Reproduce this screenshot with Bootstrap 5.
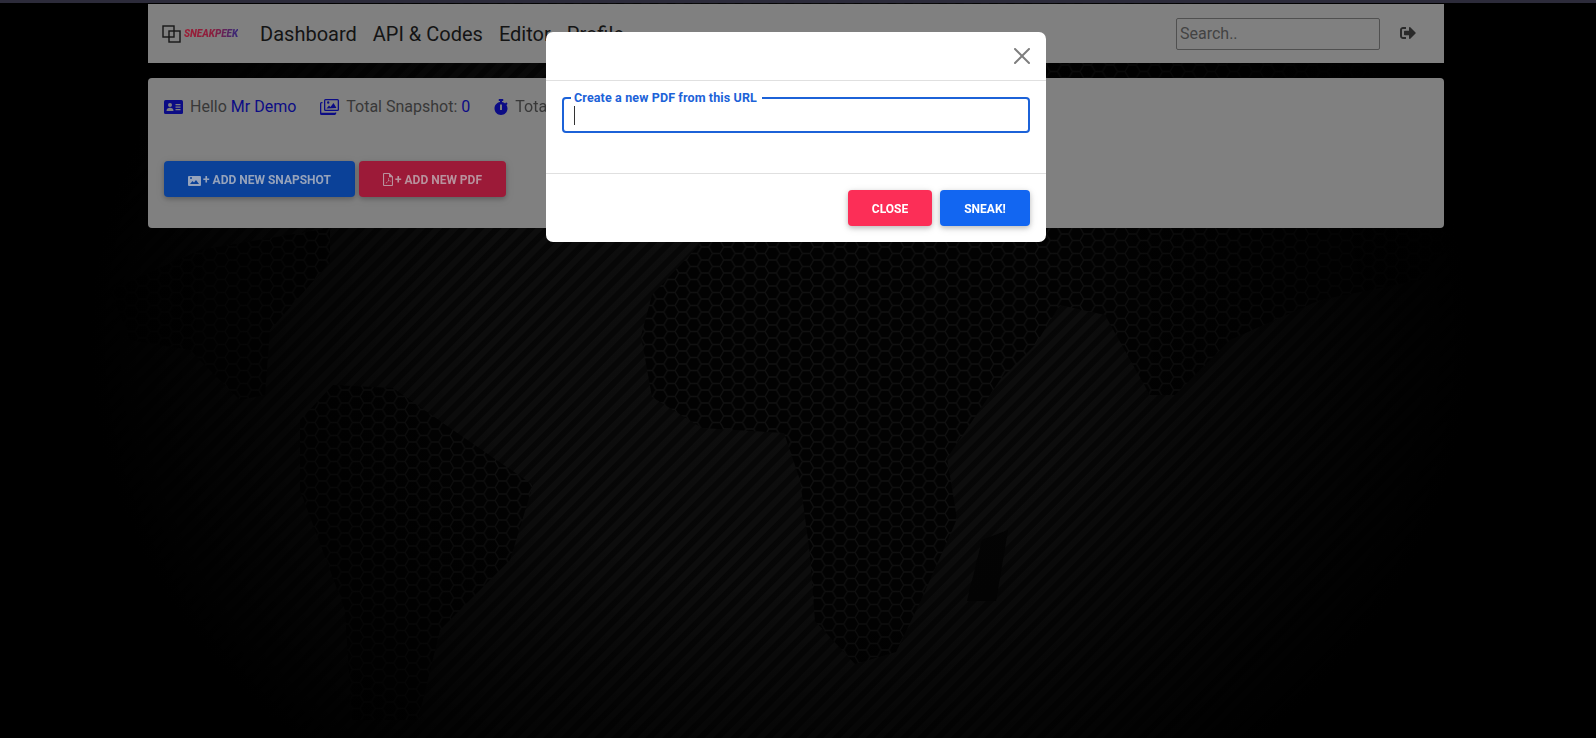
<!DOCTYPE html>
<html lang="en">
<head>
  <meta charset="UTF-8" />
  <meta name="viewport" content="width=device-width, initial-scale=1.0" />
  <title>SneakPeek - Dashboard</title>

  <link href="https://cdn.jsdelivr.net/npm/bootstrap@5.3.3/dist/css/bootstrap.min.css" rel="stylesheet" />

  <style>
    body {
      background-color: #000;
      font-family: Roboto, "Liberation Sans", sans-serif;
      padding-right: 4px;
      overflow: hidden;
      min-height: 100vh;
    }

    .map-bg {
      position: fixed;
      top: 0;
      left: 0;
      width: 100%;
      height: 100%;
      z-index: -1;
    }

    .top-strip {
      height: 3px;
      margin-right: -4px;
      margin-bottom: 1px;
      background-color: #2c2b3a;
    }

    /* page behind the modal, colours are the dimmed ones */
    .sp-navbar {
      background-color: #808080;
      height: 59px;
      padding: 0 28px 0 14px;
    }

    .sp-brand {
      gap: 3px;
      margin-right: 14px;
    }

    .sp-brand-text {
      font-size: 10px;
      font-weight: 900;
      font-style: italic;
      letter-spacing: -0.05px;
      background: linear-gradient(90deg, #9c1e36 0%, #8a1f3e 55%, #33287a 100%);
      -webkit-background-clip: text;
      background-clip: text;
      color: transparent;
    }

    .sp-navbar .nav-link {
      color: #141414;
      font-size: 20px;
      line-height: 30px;
      padding: 0 8px;
    }

    .sp-search {
      width: 204px;
      height: 32px;
      padding: 0 3px;
      margin-right: 20px;
      background-color: transparent;
      border: 1px solid #505050;
      border-radius: 2px;
      font-size: 16px;
      outline: none;
    }

    .sp-search::placeholder {
      color: #434343;
      opacity: 1;
    }

    .sp-logout {
      margin-bottom: 2px;
    }

    .sp-panel {
      margin-top: 15px;
      height: 150px;
      background-color: #808080;
      border: 0;
      border-radius: 4px;
    }

    .sp-panel .card-body {
      padding-top: 17px !important;
    }

    .sp-stats {
      gap: 24px;
      color: #383838;
      font-size: 16px;
      line-height: 24px;
    }

    .sp-stats b {
      font-weight: 400;
      color: #0c0c85;
    }

    .sp-stats svg {
      margin-right: 7px;
      fill: #0c0c85;
    }

    .sp-actions {
      margin-top: 42px;
      gap: 4px;
    }

    .sp-btn {
      height: 36px;
      padding: 1px 0 0;
      border: 0;
      border-radius: 4px;
      font-size: 12px;
      font-weight: 700;
      text-transform: uppercase;
      box-shadow: 0 2px 5px rgba(0, 0, 0, .2), 0 2px 10px rgba(0, 0, 0, .1);
    }

    .sp-btn-snap {
      width: 191px;
      background-color: #0b4198;
      color: #96a3bb;
    }

    .sp-btn-pdf {
      width: 147px;
      background-color: #9c1a38;
      color: #b8929d;
    }

    .sp-btn svg {
      fill: currentColor;
      vertical-align: -2px;
      margin-right: 2px;
    }

    /* modal */
    .sp-modal {
      padding-right: 4px;
    }

    .sp-dialog {
      max-width: 500px;
      margin-top: 32px;
    }

    .sp-dialog .modal-content {
      border: 0;
      border-radius: 7px;
    }

    .sp-dialog .modal-header {
      height: 49px;
      padding: 12px 16px;
      border-bottom: 1px solid #e0e0e0;
    }

    .sp-dialog .modal-header .btn-close {
      margin: 0 -8px 0 auto;
      opacity: .5;
    }

    .sp-dialog .modal-body {
      height: 92px;
      padding: 16px;
    }

    .sp-dialog .modal-footer {
      height: 69px;
      padding: 16px;
      gap: 8px;
      border-top: 1px solid #e0e0e0;
    }

    .sp-dialog .modal-footer > * {
      margin: 0;
    }

    .url-field {
      position: relative;
    }

    .url-field .form-control {
      height: 36px;
      padding: 0 10px;
      border: 2px solid #1c62d8;
      border-radius: 4px;
      box-shadow: none;
    }

    .url-label {
      position: absolute;
      top: -7px;
      left: 9px;
      padding: 0 5px 0 3px;
      background-color: #fff;
      color: #1c62d8;
      font-size: 12.5px;
      font-weight: 700;
      line-height: 16px;
      letter-spacing: .13px;
    }

    .url-caret {
      position: absolute;
      top: 9px;
      left: 12px;
      width: 1px;
      height: 19px;
      background-color: #333;
    }

    .sp-btn-close {
      width: 84px;
      background-color: #fc2e57;
      color: #fff;
    }

    .sp-btn-sneak {
      width: 90px;
      background-color: #1266f1;
      color: #fff;
    }

    .sp-btn-close:hover, .sp-btn-close:focus {
      background-color: #fc2e57;
      color: #fff;
    }

    .sp-btn-sneak:hover, .sp-btn-sneak:focus {
      background-color: #1266f1;
      color: #fff;
    }
  </style>
</head>
<body>
  <!-- fondo: rayas + mapa con hexagonos -->
  <svg class="map-bg" viewBox="0 0 1596 738" preserveAspectRatio="none" aria-hidden="true">
    <defs>
      <pattern id="stripes" width="12" height="12" patternUnits="userSpaceOnUse" patternTransform="rotate(45)">
        <rect width="12" height="12" fill="#070707" />
        <rect width="6" height="12" fill="#0e0e0e" />
      </pattern>
      <pattern id="hexes" width="22.5" height="13" patternUnits="userSpaceOnUse">
        <rect width="22.5" height="13" fill="#020202" />
        <path d="M0 6.500 3.750 0H11.250L15 6.500 11.250 13H3.750ZM15 6.500H22.500" fill="none" stroke="#111" stroke-width="1.300" />
      </pattern>
      <radialGradient id="fade" gradientUnits="userSpaceOnUse" cx="780" cy="340" r="1" gradientTransform="translate(780 340) scale(690 560) translate(-780 -340)">
        <stop offset="0" stop-color="#000" stop-opacity="0" />
        <stop offset=".45" stop-color="#000" stop-opacity=".1" />
        <stop offset="1" stop-color="#000" stop-opacity="1" />
      </radialGradient>
    </defs>
    <rect width="1596" height="738" fill="url(#stripes)" />
    <g fill="url(#hexes)">
      <path d="M700 244 652 295 641 336 652 397 702 428 784 433 800 480 810 555 815 621 855 664 896 652 921 600 957 519 947 458 1000 380 1035 345 1060 305 1105 315 1150 395 1175 395 1230 340 1320 300 1420 280 1480 200V60H700Z" />
      <path d="M300 420 333 385 393 388 450 428 533 485 510 560 440 630 418 720 352 720 345 610 300 490Z" />
      <path d="M110 290 200 250 330 228 330 262 270 330 265 395 240 400 190 350 130 340Z" />
    </g>
    <path d="M982 540 1008 530 996 601 967 601Z" fill="#040404" />
    <rect width="1596" height="738" fill="url(#fade)" />
  </svg>

  <div class="top-strip"></div>

  <div class="container">
    <nav class="navbar sp-navbar d-flex align-items-center flex-nowrap">
      <a class="sp-brand d-flex align-items-center text-decoration-none" href="#">
        <svg width="19" height="18" viewBox="0 0 19 18" fill="none" stroke="#161616" stroke-width="1.400" aria-hidden="true">
          <rect x="1" y="1" width="11" height="11" />
          <rect x="7" y="6" width="11" height="11" />
        </svg>
        <span class="sp-brand-text">SNEAKPEEK</span>
      </a>
      <ul class="navbar-nav flex-row me-auto">
        <li class="nav-item"><a class="nav-link" href="#">Dashboard</a></li>
        <li class="nav-item"><a class="nav-link" href="#">API &amp; Codes</a></li>
        <li class="nav-item"><a class="nav-link" href="#">Editor</a></li>
        <li class="nav-item"><a class="nav-link" href="#">Profile</a></li>
      </ul>
      <input class="sp-search" type="text" placeholder="Search.." />
      <svg class="sp-logout" width="16" height="16" viewBox="0 0 512 512" fill="#2a2a2a" aria-hidden="true">
        <path d="M497 273L329 441c-15 15-41 4.500-41-17v-96H152c-13.300 0-24-10.700-24-24v-96c0-13.300 10.700-24 24-24h136V88c0-21.400 25.900-32 41-17l168 168c9.300 9.400 9.300 24.600 0 34zM192 436v-40c0-6.600-5.400-12-12-12H96c-17.700 0-32-14.300-32-32V160c0-17.700 14.300-32 32-32h84c6.600 0 12-5.400 12-12V76c0-6.600-5.400-12-12-12H96c-53 0-96 43-96 96v192c0 53 43 96 96 96h84c6.600 0 12-5.400 12-12z" />
      </svg>
    </nav>

    <div class="card sp-panel">
      <div class="card-body p-3">
        <div class="sp-stats d-flex align-items-center">
          <span class="d-flex align-items-center">
            <svg width="19" height="14" viewBox="0 0 19 14" aria-hidden="true">
              <rect width="19" height="14" rx="1.500" />
              <circle cx="6" cy="5" r="2" fill="#808080" />
              <path d="M2.500 11c0-2.200 1.500-3.300 3.500-3.300S9.500 8.800 9.500 11Z" fill="#808080" />
              <path d="M11.500 4h5v1.200h-5zM11.500 6.500h5v1.200h-5zM11.500 9h5v1.200h-5z" fill="#808080" />
            </svg>
            <span>Hello <b>Mr Demo</b></span>
          </span>
          <span class="d-flex align-items-center">
            <svg width="19" height="16" viewBox="0 0 19 16" aria-hidden="true">
              <path fill-rule="evenodd" d="M5.500 0h12A1.500 1.500 0 0 1 19 1.500v9a1.500 1.500 0 0 1-1.500 1.500h-12A1.500 1.500 0 0 1 4 10.500v-9A1.500 1.500 0 0 1 5.500 0Zm0 1.300a.2.2 0 0 0-.2.2v9c0 .1.100.2.2.2h12a.2.2 0 0 0 .2-.2v-9a.2.2 0 0 0-.2-.2Z" />
              <path d="M6.500 9.500 9 6.500l1.500 1.500 3-4 3 5ZM7 3.500a1.200 1.200 0 1 0 2.400 0 1.200 1.200 0 0 0-2.400 0Z" />
              <path d="M0 4.500a1.500 1.500 0 0 1 1.500-1.500H2.500v1.300h-1a.2.2 0 0 0-.2.2v9c0 .1.100.2.2.2H15v-.2h1.300V14a2 2 0 0 1-1.500 2H1.500A1.500 1.500 0 0 1 0 14.500Z" />
            </svg>
            <span>Total Snapshot: <b>0</b></span>
          </span>
          <span class="d-flex align-items-center">
            <svg width="14" height="16" viewBox="0 0 448 512" aria-hidden="true">
              <path d="M432 304c0 114.900-93.100 208-208 208S16 418.900 16 304c0-104 76.300-190.200 176-205.500V64h-28c-6.600 0-12-5.400-12-12V12c0-6.600 5.400-12 12-12h120c6.600 0 12 5.400 12 12v40c0 6.600-5.400 12-12 12h-28v34.500c37.500 5.800 71.700 21.600 99.700 44.600l27.500-27.500c4.700-4.700 12.300-4.700 17 0l28.300 28.300c4.700 4.700 4.700 12.300 0 17l-29.400 29.400-.6.600C419.700 223.300 432 262.200 432 304zm-176 36V188.500c0-6.600-5.400-12-12-12h-40c-6.600 0-12 5.400-12 12V340c0 6.600 5.400 12 12 12h40c6.600 0 12-5.400 12-12z" />
            </svg>
            <span>Total: <b>0</b></span>
          </span>
        </div>
        <div class="sp-actions d-flex">
          <button type="button" class="btn sp-btn sp-btn-snap">
            <svg width="13" height="10" viewBox="0 0 13 10" aria-hidden="true">
              <path fill-rule="evenodd" d="M1 0h11a1 1 0 0 1 1 1v8a1 1 0 0 1-1 1H1a1 1 0 0 1-1-1V1a1 1 0 0 1 1-1Zm1 8h9L8 4 6 6.500 4.500 5Zm1-5a1 1 0 1 0 0-2 1 1 0 0 0 0 2Z" />
            </svg>+ Add new snapshot
          </button>
          <button type="button" class="btn sp-btn sp-btn-pdf">
            <svg width="10" height="13" viewBox="0 0 10 13" aria-hidden="true">
              <path fill-rule="evenodd" d="M1 0h5.500L10 3.500V12a1 1 0 0 1-1 1H1a1 1 0 0 1-1-1V1a1 1 0 0 1 1-1Zm.1 1.100v10.800h7.800V4.200H6V1.100ZM3 10.500c-.8-.5.600-1.700 1.700-2.100.4-.8.500-1.300.5-1.800-.3-.8-.3-1.700.2-1.700s.5 1 .2 1.800c.3.500.6.900 1 1.100 1-.1 1.700.1 1.500.5-.2.400-1 .3-1.700-.2-.6.100-1.100.3-1.600.5-.6 1.200-1.200 2.100-1.800 1.900Z" />
            </svg>+ Add new PDF
          </button>
        </div>
      </div>
    </div>
  </div>

  <div class="modal d-block sp-modal" tabindex="-1" role="dialog" aria-modal="true">
    <div class="modal-dialog sp-dialog">
      <div class="modal-content">
        <div class="modal-header">
          <button type="button" class="btn-close" aria-label="Close"></button>
        </div>
        <div class="modal-body">
          <div class="url-field">
            <input type="text" class="form-control" id="pdfUrl" />
            <label class="url-label" for="pdfUrl">Create a new PDF from this URL</label>
            <span class="url-caret"></span>
          </div>
        </div>
        <div class="modal-footer">
          <button type="button" class="btn sp-btn sp-btn-close">Close</button>
          <button type="button" class="btn sp-btn sp-btn-sneak">Sneak!</button>
        </div>
      </div>
    </div>
  </div>

  <script src="https://cdn.jsdelivr.net/npm/bootstrap@5.3.3/dist/js/bootstrap.bundle.min.js"></script>
</body>
</html>
